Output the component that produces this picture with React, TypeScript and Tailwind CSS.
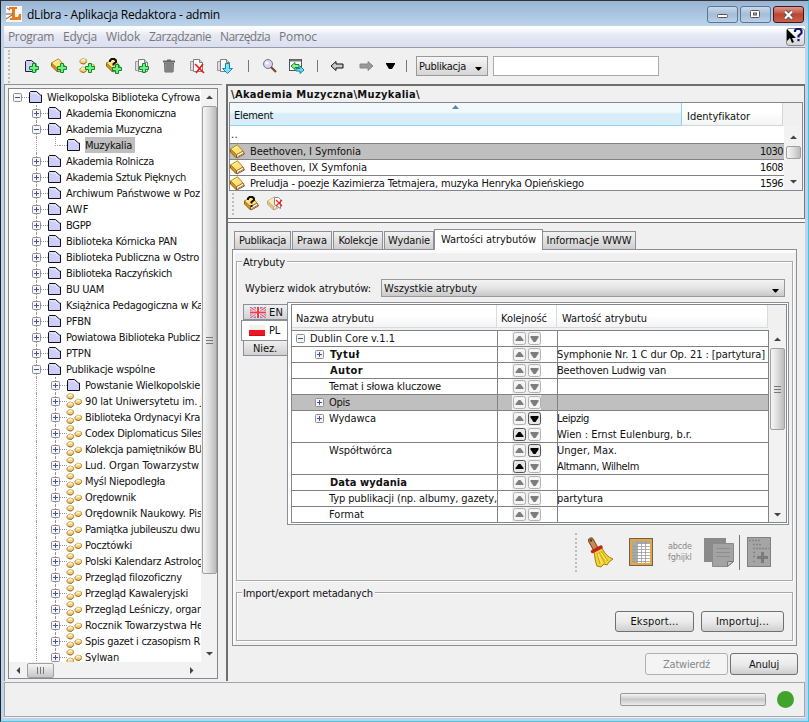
import React, { useLayoutEffect, useRef, useState } from "react";

/* Text run whose tracking is adjusted so that it spans w pixels. */
function T({ w, children, className = "" }: { w?: number; children: string; className?: string }) {
  const ref = useRef<HTMLSpanElement>(null);
  const [ls, setLs] = useState(0);
  useLayoutEffect(() => {
    if (!w || !ref.current) return;
    const nat = ref.current.getBoundingClientRect().width;
    setLs((w - nat) / children.length);
  }, [w, children]);
  return (
    <span ref={ref} className={"inline-block shrink-0 whitespace-pre " + className} style={{ letterSpacing: ls }}>
      {children}
    </span>
  );
}

const Svg = ({ w = 16, h = 16, children, className = "" }: { w?: number; h?: number; children: React.ReactNode; className?: string }) => (
  <svg width={w} height={h} viewBox={`0 0 ${w} ${h}`} className={"block shrink-0 " + className}>{children}</svg>
);

const Plus = ({ x = 0, y = 0 }: { x?: number; y?: number }) => (
  <path transform={`translate(${x} ${y})`} d="M3.5.5h3v3h3v3h-3v3h-3v-3h-3v-3h3z" fill="#6cf084" stroke="#0c8c26" />
);
const FolderIcon = () => (
  <Svg w={14} h={14}>
    <path d="M.5 2.500l1-1h6l4 3.500h1v7.500h-12z" fill="#cfcdfb" stroke="#111" />
    <path d="M2 3h5l3 3" stroke="#efeeff" fill="none" />
  </Svg>
);
const Book = () => (
  <>
    <path d="M6.500 10.500L13 7l1.500 3L7 14z" fill="#fff" stroke="#8a5b2c" />
    <path d="M8 12.500l6-3.500" stroke="#a7744a" />
    <path d="M.5 5v3L6.500 14v-3.500z" fill="#d89a1c" stroke="#8d5a08" />
    <path d="M.5 5L7.500.8 13 7l-6.500 3.500z" fill="#ffe27a" stroke="#b88416" />
    <path d="M2.500 5L7.200 2.200" stroke="#fff6bf" />
  </>
);
const BookIcon = () => <Svg w={16} h={15}><Book /></Svg>;
const GroupShape = () => (
  <g stroke="#b88a40" strokeWidth=".8">
    <path d="M.8 2.500l3-2 3.500 1 .4 2.500-2.700 2-3.800-1z" fill="#f6cf7c" />
    <path d="M.8 11l3-2 3.500 1 .4 2.500-2.700 2-3.800-1z" fill="#f6cf7c" />
    <path d="M8.800 8l3-2 3.500 1 .4 2.500-2.700 2-3.800-1z" fill="#f6cf7c" />
    <path d="M2.200 2.800l2-1.300 2 .7M2.200 11.300l2-1.300 2 .7M10.200 8.300l2-1.300 2 .7" stroke="#fff3c9" strokeWidth="1.500" fill="none" />
    <path d="M2 5.300l3 .8 2.500-1.800M2 13.800l3 .8 2.500-1.800M10 10.800l3 .8 2.500-1.800" stroke="#8d6426" fill="none" />
  </g>
);
const PageShape = () => (
  <g>
    <path d="M1.500 3.500h3v9h-3z" fill="#ddd" stroke="#999" />
    <path d="M4.500 1.500h6l3 3v9h-9z" fill="#fafafa" stroke="#808080" />
    <path d="M10.500 1.500v3h3" fill="#ddd" stroke="#808080" />
  </g>
);
const Quest = ({ x, y }: { x: number; y: number }) => (
  <path transform={`translate(${x} ${y})`} d="M0 3V1.500L1.500 0h3L6 1.500v1.500L3.500 5v1.500M3.500 8v2" fill="none" stroke="#111" strokeWidth="2" />
);

function Handle({ open, top = true, bottom = true }: { open: boolean; top?: boolean; bottom?: boolean }) {
  return (
    <div className="flex h-4 w-[9px] shrink-0 flex-col items-center">
      <div className={"h-1 border-l border-dotted " + (top ? "border-[#999]" : "border-transparent")} />
      <HandleBox open={open} />
      <div className={"h-[3px] border-l border-dotted " + (bottom ? "border-[#999]" : "border-transparent")} />
    </div>
  );
}
const HandleBox = ({ open }: { open: boolean }) => (
  <Svg w={9} h={9}>
    <rect x=".5" y=".5" width="8" height="8" rx="1" fill="#f5f5f5" stroke="#8f8f8f" />
    <path d={open ? "M2 4.500h5" : "M2 4.500h5M4.500 2v5"} stroke="#3a559c" />
  </Svg>
);

type Row = [number, string, string, number];
const tree: Row[] = [
  [0, "-", "Wielkopolska Biblioteka Cyfrowa", 153],
  [1, "+", "Akademia Ekonomiczna", 110],
  [1, "-", "Akademia Muzyczna", 96],
  [2, "", "Muzykalia", 46],
  [1, "+", "Akademia Rolnicza", 88],
  [1, "+", "Akademia Sztuk Pięknych", 120],
  [1, "+", "Archiwum Państwowe w Poz", 134],
  [1, "+", "AWF", 23],
  [1, "+", "BGPP", 25],
  [1, "+", "Biblioteka Kórnicka PAN", 111],
  [1, "+", "Biblioteka Publiczna w Ostro", 133],
  [1, "+", "Biblioteka Raczyńskich", 106],
  [1, "+", "BU UAM", 38],
  [1, "+", "Książnica Pedagogiczna w Ka", 137],
  [1, "+", "PFBN", 25],
  [1, "+", "Powiatowa Biblioteka Publicz", 134],
  [1, "+", "PTPN", 25],
  [1, "-", "Publikacje wspólne", 89],
  [2, "+", "Powstanie Wielkopolskie", 115],
  [3, "+", "90 lat Uniwersytetu im. J", 118],
  [3, "+", "Biblioteka Ordynacyi Kra", 115],
  [3, "+", "Codex Diplomaticus Siles", 117],
  [3, "+", "Kolekcja pamiętników BU", 117],
  [3, "+", "Lud. Organ Towarzystw", 114],
  [3, "+", "Myśl Niepodległa", 80],
  [3, "+", "Orędownik", 51],
  [3, "+", "Orędownik Naukowy. Pis", 117],
  [3, "+", "Pamiątka jubileuszu dwu", 115],
  [3, "+", "Pocztówki", 47],
  [3, "+", "Polski Kalendarz Astrolog", 118],
  [3, "+", "Przegląd filozoficzny", 97],
  [3, "+", "Przegląd Kawaleryjski", 103],
  [3, "+", "Przegląd Leśniczy, organ", 118],
  [3, "+", "Rocznik Towarzystwa He", 118],
  [3, "+", "Spis gazet i czasopism R", 115],
  [3, "+", "Sylwan", 34],
];

function TreeRow({ row }: { row: Row }) {
  const [level, sign, text, w] = row;
  return (
    <div className="flex h-4 shrink-0 items-center">
      {level === 0 && <div className="w-1 shrink-0" />}
      {level === 1 && <div className="w-[23px] shrink-0" />}
      {level > 1 && (
        <>
          <div className="w-[27px] shrink-0" />
          <div className="h-4 w-[15px] shrink-0 border-l border-dotted border-[#999]" />
        </>
      )}
      {sign ? (
        <Handle open={sign === "-"} top={level > 0} bottom={level > 0} />
      ) : (
        <div className="flex h-4 w-[9px] shrink-0 justify-end">
          <div className="h-[9px] w-[5px] border-b border-l border-dotted border-[#999]" />
        </div>
      )}
      <div className="mt-px h-px w-[7px] shrink-0 border-t border-dotted border-[#999]" />
      <div className="w-[19px] shrink-0">
        {level === 3 ? <Svg w={17} className="-ml-px"><GroupShape /></Svg> : <FolderIcon />}
      </div>
      {text === "Muzykalia" ? (
        <span className="-ml-px flex h-4 items-center bg-[#bfbfbf] pr-[3px]"><T w={47}>{text}</T></span>
      ) : (
        <T w={w} className="-ml-px">{text}</T>
      )}
    </div>
  );
}

const Tri = ({ dir, color = "#444" }: { dir: "u" | "d" | "l" | "r"; color?: string }) => {
  const d = { u: "M1 6h7L4.500 2.500z", d: "M1 3h7L4.500 6.500z", l: "M6 1v7L2.500 4.500z", r: "M3 1v7l3.500-3.500z" }[dir];
  return <Svg w={9} h={9}><path d={d} fill={color} /></Svg>;
};
const Grip = () => (
  <div className="flex flex-col gap-[2px]">
    {[0, 1, 2].map((i) => <div key={i} className="h-px w-[7px] bg-[#777]" />)}
  </div>
);
const thumbV = "flex items-center justify-center rounded-[2px] border border-[#a0a0a0] bg-linear-to-r from-[#f6f6f6] via-[#dddddd] to-[#bcbcbc]";
const btn = "flex items-center justify-center rounded-[3px] border border-[#707070] bg-linear-to-b from-[#f4f4f4] via-[#ebebeb] to-[#cfcfcf]";

function Gripper({ className = "" }: { className?: string }) {
  return <div className={"w-[2px] shrink-0 border-l-2 border-dotted border-[#bdbdbd] " + className} />;
}

function OrderButtons({ up = false, down = false }: { up?: boolean; down?: boolean }) {
  const B = (on: boolean, d: string) => (
    <Svg w={13} h={13}>
      <rect x=".5" y=".5" width="12" height="12" rx="2" fill={on ? "#e6e6e6" : "#f4f4f4"} stroke={on ? "#555" : "#b2b2b2"} />
      <path d={d} fill={on ? "#000" : "#7d7d7d"} />
    </Svg>
  );
  return (
    <div className="ml-[14px] flex h-[15px] w-[29px] items-center gap-[2px] bg-[#efefef] pl-px">
      {B(up, "M2.500 9V8l3-4h2l3 4v1z")}
      {B(down, "M2.500 4v1.500l3 4.500h2l3-4.500V4z")}
    </div>
  );
}

interface Attr { name: string; w: number; bold?: boolean; exp?: string; vals: [string, number][]; sel?: boolean }
const attrs: Attr[] = [
  { name: "Dublin Core v.1.1", w: 85, exp: "-", vals: [["", 0]] },
  { name: "Tytuł", w: 30, bold: true, exp: "+", vals: [["Symphonie Nr. 1 C dur Op. 21 : [partytura]", 208]] },
  { name: "Autor", w: 33, bold: true, vals: [["Beethoven Ludwig van", 109]] },
  { name: "Temat i słowa kluczowe", w: 112, vals: [["", 0]] },
  { name: "Opis", w: 21, exp: "+", vals: [["", 0]], sel: true },
  { name: "Wydawca", w: 47, exp: "+", vals: [["Leipzig", 32], ["Wien : Ernst Eulenburg, b.r.", 135]] },
  { name: "Współtwórca", w: 63, vals: [["Unger, Max.", 60], ["Altmann, Wilhelm", 82]] },
  { name: "Data wydania", w: 77, bold: true, vals: [["", 0]] },
  { name: "Typ publikacji (np. albumy, gazety,", w: 168, vals: [["partytura", 46]] },
  { name: "Format", w: 35, vals: [["", 0]] },
];

function AttrRow({ a }: { a: Attr }) {
  return (
    <div className={"flex shrink-0 border-t border-[#828282] " + (a.sel ? "bg-[#bfbfbf]" : "bg-white")}>
      <div className="flex w-[205px] shrink-0 overflow-hidden">
        {a.exp === "-" ? (
          <div className="flex h-[15px] items-center gap-[5px] pl-1"><HandleBox open /><T w={a.w}>{a.name}</T></div>
        ) : (
          <div className="flex h-[15px] items-center pl-[23px]">
            <div className="w-[15px] shrink-0">{a.exp && <HandleBox open={false} />}</div>
            <T w={a.w} className={a.bold ? "font-bold" : "-ml-px"}>{a.name}</T>
          </div>
        )}
      </div>
      <div className="flex w-[61px] shrink-0 flex-col gap-px border-x border-[#828282]">
        {a.vals.map((_, i) => <OrderButtons key={i} up={i > 0} down={a.vals.length > 1 && i === 0} />)}
      </div>
      <div className="flex w-[211px] flex-col gap-px border-r border-[#828282]">
        {a.vals.map(([v, w], i) => (
          <div key={i} className="-ml-px flex h-[15px] items-center">{v && <T w={w}>{v}</T>}</div>
        ))}
      </div>
    </div>
  );
}

function Titlebar() {
  const wb = "flex h-[17px] w-[31px] items-center justify-center rounded-[3px] border border-[#5d7590] bg-linear-to-b from-[#c9d9ea] via-[#a5bdd8] to-[#b9d0e8]";
  return (
    <div className="flex h-[25px] shrink-0 items-start bg-linear-to-b from-[#98b4d3] to-[#bdd5ec] pl-[5px]">
      <Svg w={16} h={16} className="mt-[5px]">
        <rect width="16" height="16" fill="#fdf6ee" />
        <path d="M3 1h8v2h-2v8h3l1-3h2v6H4v-2h2V3H3z" fill="#e87a1f" />
        <path d="M0 8h7M0 13l6-4M1 2l3 2" stroke="#7d5a3c" />
      </Svg>
      <div className="ml-[5px] mt-[5px] flex h-[17px] items-center font-['Open_Sans',sans-serif] text-[12px] text-black [font-stretch:normal]">
        <T w={193}>dLibra - Aplikacja Redaktora - admin</T>
      </div>
      <div className="ml-auto mr-[4px] mt-[5px] flex gap-[2px]">
        <div className={wb}><Svg w={12} h={10}><rect x=".5" y="4.500" width="10" height="3" rx="1" fill="#fff" stroke="#555" /></Svg></div>
        <div className={wb}><Svg w={11} h={9}><rect x=".5" y=".5" width="9" height="7" rx="1" fill="#fff" stroke="#555" /><rect x="3.500" y="3" width="3" height="2" fill="#a9c2dd" stroke="#555" /></Svg></div>
        <div className="flex h-[17px] w-[31px] items-center justify-center rounded-[3px] border border-[#4c1418] bg-linear-to-b from-[#dc9a8c] via-[#bd4533] to-[#c9604a]">
          <Svg w={11} h={10}><path d="M2 1.500l7 7M9 1.500l-7 7" stroke="#555" strokeWidth="4" /><path d="M2 1.500l7 7M9 1.500l-7 7" stroke="#fff" strokeWidth="2.200" /></Svg>
        </div>
      </div>
    </div>
  );
}

const menus: [string, number][] = [["Program", 46], ["Edycja", 34], ["Widok", 34], ["Zarządzanie", 62], ["Narzędzia", 50], ["Pomoc", 38]];

function Menubar() {
  return (
    <div className="flex h-[22px] shrink-0 items-center border-b border-[#999aa5] bg-linear-to-b from-[#fdfdfe] from-10% via-[#e6e9f4] via-45% to-[#dadff1] pl-1 font-['Open_Sans',sans-serif] text-[12px] text-[#777] [font-stretch:normal]">
      {menus.map(([m, w]) => <div key={m} className="mr-[9px] flex"><T w={w}>{m}</T></div>)}
      <div className="ml-auto flex h-[18px] w-[19px] items-center justify-center rounded-[3px] border border-[#888] bg-linear-to-b from-white to-[#d5d5d5]">
        <Svg w={19} h={18}>
          <path d="M1 1v12l3-3 2 5 2-1-2-4h4z" fill="#000" />
          <path d="M9 4V2.500L10.500 1h3.500l1.500 1.500V5L12.500 8v1.500M12.500 11v2.300" fill="none" stroke="#17177e" strokeWidth="2.200" />
        </Svg>
      </div>
    </div>
  );
}

function Toolbar() {
  const Sep = ({ className }: { className: string }) => <div className={"h-3 w-px shrink-0 bg-[#777] " + className} />;
  return (
    <div className="flex h-[36px] shrink-0 items-center bg-[#f0f0f0] pl-[4px]">
      <Gripper className="h-[33px]" />
      <div className="ml-[14px] flex w-[209px] shrink-0 justify-between">
        <Svg w={17}><path d="M1.500 3.500l1-1h5l3.500 3h1v8h-10.500z" fill="#d2cffc" stroke="#222" /><Plus x={5} y={5} /></Svg>
        <Svg w={17}><Book /><Plus x={6} y={5} /></Svg>
        <Svg w={17}><GroupShape /><Plus x={6} y={5} /></Svg>
        <Svg w={17}><Book /><Quest x={4} y={1} /><Plus x={6} y={6} /></Svg>
        <Svg w={17}><PageShape /><Plus x={5} y={5} /></Svg>
        <Svg w={17}><path d="M2 3.500h12M6 2.500h4" stroke="#666" strokeWidth="2" /><path d="M3.500 5h9l-.5 9H4z" fill="#999" stroke="#666" /><path d="M6 6v7M8 6v7M10 6v7" stroke="#6b6b6b" /></Svg>
        <Svg w={17}><PageShape /><path d="M6 6l9 9M14 6l-7 9" stroke="#f01717" strokeWidth="1.600" /></Svg>
        <Svg w={17}><PageShape /><path d="M9.500 5.500h4v5h3L11.500 15.500l-5-5h3z" fill="#7be3fb" stroke="#1a87a8" /></Svg>
      </div>
      <Sep className="ml-[15px]" />
      <Svg w={17} className="ml-[12px]">
        <circle cx="7" cy="6" r="4.500" fill="#d7d3fb" stroke="#777" /><circle cx="6" cy="5" r="1.500" fill="#fff" /><path d="M10 9l5 5" stroke="#7a4a28" strokeWidth="2.200" />
      </Svg>
      <Svg w={17} className="ml-[10px]">
        <rect x="1.500" y="1.500" width="12" height="11" fill="#fff" stroke="#555" /><path d="M2 2.500h11" stroke="#777" strokeWidth="2" />
        <path d="M3 8l4-3.500v2h4v3H7v2z" fill="#8fee9a" stroke="#138a2c" /><path d="M8 10.500h4V8l4 4-4 3.500V13H8z" fill="#6fdcf3" stroke="#17809c" />
      </Svg>
      <Sep className="ml-[12px]" />
      <Svg w={15} className="ml-[12px]"><path d="M1 8l5-4.500v2.500h7v4H6v2.500z" fill="#ccc" stroke="#111" /></Svg>
      <Svg w={15} className="ml-[14px]"><path d="M14 8L9 3.500v2.500H1v4h8v2.500z" fill="#999" stroke="#888" /></Svg>
      <Svg w={9} className="ml-[12px]"><path d="M0 5h9v1L6 11H3L0 6z" fill="#000" /></Svg>
      <Sep className="ml-[11px]" />
      <div className="ml-[9px] flex h-5 w-[72px] shrink-0 items-center border border-[#999] bg-linear-to-b from-[#f7f7f7] to-[#d5d5d5] pl-[2px]">
        <T w={47}>Publikacja</T>
        <Svg w={9} h={9} className="ml-[8px] mt-1"><path d="M1 3h7L5 6.500H4z" fill="#000" /></Svg>
      </div>
      <div className="ml-[5px] h-5 w-[166px] shrink-0 border border-[#aaa] bg-white" />
    </div>
  );
}

function LeftPane() {
  return (
    <div className="h-[597px] w-[218px] shrink-0 border-l border-t border-[#8f8f8f] bg-[#f0f0f0] pl-[3px] pt-[3px]">
      <div className="flex h-[591px] w-[210px] flex-col border border-[#828790] bg-white">
        <div className="flex h-[573px]">
          <div className="flex w-[192px] shrink-0 flex-col overflow-hidden">
            {tree.map((r, i) => <TreeRow key={i} row={r} />)}
          </div>
          <div className="flex w-4 flex-col items-center bg-[#f2f2f2]">
            <div className="flex h-[17px] items-center"><Tri dir="u" /></div>
            <div className={thumbV + " h-[468px] w-[15px]"}><Grip /></div>
            <div className="mt-auto flex h-[17px] items-center"><Tri dir="d" /></div>
          </div>
        </div>
        <div className="flex h-4 items-center bg-[#f2f2f2]">
          <div className="flex w-[18px] justify-center"><Tri dir="l" /></div>
          <div className="flex h-[15px] w-[27px] items-center justify-center gap-[2px] rounded-[2px] border border-[#a0a0a0] bg-linear-to-b from-[#f6f6f6] to-[#c6c6c6]">
            {[0, 1, 2].map((i) => <div key={i} className="h-[7px] w-px bg-[#777]" />)}
          </div>
          <div className="ml-auto mr-[21px]"><Tri dir="r" /></div>
        </div>
      </div>
    </div>
  );
}

const pubs: [string, number, string, boolean][] = [
  ["Beethoven, I Symfonia", 111, "1030", true],
  ["Beethoven, IX Symfonia", 117, "1608", false],
  ["Preludja - poezje Kazimierza Tetmajera, muzyka Henryka Opieńskiego", 334, "1596", false],
];

function ListPane() {
  return (
    <div className="flex h-[133px] shrink-0 flex-col border-b border-r border-[#777] pl-px pt-px">
      <div className="flex h-[15px] items-center pl-[2px] font-bold"><T w={189}>\Akademia Muzyczna\Muzykalia\</T></div>
      <div className="flex h-[89px] w-[574px] flex-col border border-[#828790] bg-[#f0f0f0]">
        <div className="flex h-[23px] shrink-0">
          <div className="flex w-[452px] flex-col border-b border-r border-[#8fd4f2] bg-linear-to-b from-[#f2f9fd] from-40% to-[#d8edf7] to-50%">
            <Svg w={9} h={4} className="ml-[221px] mt-[2px]"><path d="M1 4h7L4.500 0z" fill="#5b87a8" /></Svg>
            <div className="-mt-px flex h-[14px] items-center pl-[4px]"><T w={39}>Element</T></div>
          </div>
          <div className="flex w-[101px] items-center border-b border-r border-[#d5d5d5] bg-linear-to-b from-white from-40% to-[#f3f4f5] pl-[5px] pt-[5px]"><T w={63}>Identyfikator</T></div>
        </div>
        <div className="flex h-[64px]">
          <div className="flex w-[554px] shrink-0 flex-col overflow-hidden bg-white">
            <div className="flex h-[17px] shrink-0 items-end pb-px pl-px"><T w={7}>..</T></div>
            {pubs.map(([t, w, id, sel]) => (
              <div key={id} className={"flex h-4 shrink-0 items-center border-t border-[#828282] " + (sel ? "bg-[#bfbfbf]" : "")}>
                <BookIcon />
                <div className="ml-1 flex"><T w={w}>{t}</T></div>
                <div className="ml-auto mr-px flex"><T w={23}>{id}</T></div>
              </div>
            ))}
          </div>
          <div className="flex flex-1 flex-col items-center bg-[#f2f2f2] pt-[3px]">
            <div className="flex h-[17px] items-center"><Tri dir="u" /></div>
            <div className={thumbV + " h-[13px] w-[15px]"} />
            <div className="mt-auto flex h-[17px] items-center"><Tri dir="d" /></div>
          </div>
        </div>
      </div>
      <div className="flex h-[25px] items-center pl-[3px]">
        <Gripper className="h-[22px]" />
        <Svg w={16} className="ml-[10px]"><Book /><Quest x={4} y={1} /></Svg>
        <Svg w={17} className="ml-[7px]"><g opacity=".5"><Book /></g><path d="M7.500 1.500h4l2 2v9l-6-4z" fill="#fff" stroke="#888" /><path d="M9 4l6 6M15 4L9 10" stroke="#ec2323" strokeWidth="1.300" /></Svg>
      </div>
    </div>
  );
}

function Tab({ children, w, className }: { children: string; w: number; className: string }) {
  return (
    <div className={"flex h-[18px] shrink-0 items-center justify-center border border-b-0 border-[#8b8f98] bg-linear-to-b from-[#f2f2f2] to-[#cecece] " + className}>
      <T w={w}>{children}</T>
    </div>
  );
}

function AttrTable() {
  const hd = "flex items-center border-b border-r border-[#dadbdc] bg-linear-to-b from-white from-50% to-[#f3f4f6] pt-[4px]";
  return (
    <div className="flex">
      <div className="flex w-[46px] shrink-0 flex-col items-end pt-[2px]">
        <div className="flex h-4 w-[44px] items-center gap-[3px] border border-r-0 border-[#8b8f98] bg-linear-to-b from-[#f0f0f0] to-[#d2d2d2] pl-[6px]">
          <Svg w={16} h={11}>
            <rect width="16" height="11" fill="#8189d0" />
            <path d="M0 0l16 11M16 0L0 11" stroke="#f8e6ec" strokeWidth="3" />
            <path d="M0 0l16 11M16 0L0 11" stroke="#ec5562" strokeWidth="1.100" />
            <path d="M8 0v11M0 5.500h16" stroke="#fff" strokeWidth="3.600" />
            <path d="M8 0v11M0 5.500h16" stroke="#f03a44" strokeWidth="2" />
          </Svg>
          <T w={14}>EN</T>
        </div>
        <div className="flex h-[21px] w-[46px] items-center gap-[4px] border border-r-0 border-[#8b8f98] bg-white pl-[7px]">
          <Svg w={16} h={11}><rect width="16" height="11" fill="#f1f1f1" /><rect y="5" width="16" height="6" fill="#ee1722" /><path d="M0 10.500h16" stroke="#c01218" /></Svg>
          <T w={11}>PL</T>
        </div>
        <div className="flex h-[15px] w-[44px] items-center border border-r-0 border-t-0 border-[#8b8f98] bg-linear-to-b from-[#efefef] to-[#d0d0d0] pl-[9px]"><T w={24}>Niez.</T></div>
      </div>
      <div className="h-[223px] w-[502px] shrink-0 border border-[#8b8f98] bg-white pl-[3px] pt-px">
        <div className="flex h-[219px] w-[496px] flex-col overflow-hidden border border-[#828790] bg-[#f0f0f0]">
          <div className="flex h-[23px] shrink-0">
            <div className={hd + " w-[205px] pl-1"}><T w={78}>Nazwa atrybutu</T></div>
            <div className={hd + " w-[60px] pl-1"}><T w={46}>Kolejność</T></div>
            <div className={hd + " w-[211px] pl-[5px]"}><T w={85}>Wartość atrybutu</T></div>
          </div>
          <div className="mt-[2px] flex h-[192px]">
            <div className="flex w-[477px] shrink-0 flex-col">{attrs.map((a) => <AttrRow key={a.name} a={a} />)}</div>
            <div className="flex flex-1 flex-col items-center bg-[#f2f2f2]">
              <div className="flex h-[18px] items-center"><Tri dir="u" /></div>
              <div className={thumbV + " h-[82px] w-[15px]"}><Grip /></div>
              <div className="mt-auto flex h-[16px] items-center"><Tri dir="d" /></div>
            </div>
          </div>
        </div>
      </div>
    </div>
  );
}

function EditTools() {
  return (
    <div className="mt-[7px] flex h-[40px] items-center pl-[338px]">
      <Gripper className="h-[39px]" />
      <Svg w={28} h={31} className="ml-[10px]">
        <path d="M4 3.500l5 9" stroke="#7c4a22" strokeWidth="6" strokeLinecap="round" />
        <path d="M4 3.500l5 9" stroke="#c78c50" strokeWidth="4" strokeLinecap="round" />
        <circle cx="4" cy="3.500" r="1.200" fill="#5d3718" />
        <path d="M15 11C18 17 21 20 26 22L22 25 20 28 17 27 14 30 10 29C8 24 8 20 7 15z" fill="#f3d32f" stroke="#a57c0c" />
        <path d="M10 16l3 11M12 15l6 11M14 14l7 10" stroke="#b89416" strokeWidth=".8" />
        <path d="M11 17l4 10M14 16l5 7" stroke="#fff29a" strokeWidth=".8" />
        <path d="M5.500 14.500l8.500-4.500" stroke="#c52122" strokeWidth="3.500" strokeLinecap="round" />
      </Svg>
      <Svg w={25} h={28} className="ml-[14px]">
        <rect x=".5" y=".5" width="23" height="27" fill="#fff" stroke="#6b6255" /><rect x="2" y="2" width="20" height="24" fill="#fff" stroke="#e5a841" strokeWidth="2" />
        <path d="M3 3h5v22H3zM3 3h18v3H3z" fill="#a9a9a9" />
        <path d="M3 8.500h18M3 11.500h18M3 14.500h18M3 17.500h18M3 20.500h18M3 23.500h18M8.500 3v22M12.500 3v22M16.500 3v22" stroke="#9a9a9a" strokeWidth=".8" />
      </Svg>
      <div className="ml-[14px] flex w-[26px] flex-col text-[9px] leading-[11px] text-[#888]"><T w={25}>abcde</T><T w={25}>fghijkl</T></div>
      <Svg w={31} h={31} className="ml-[10px]">
        <path d="M0 1h22v24H0z" fill="#8a8a8a" /><path d="M8.500 6.500h21v18l-6 5h-15z" fill="#a3a3a3" stroke="#8a8a8a" /><path d="M23.500 29.500v-5h6z" fill="#c4c4c4" stroke="#7a7a7a" />
        <path d="M4 4.500h14M12 11.500h14M12 15.500h14M12 19.500h14M4 9.500h3M4 13.500h3" stroke="#8e8e8e" />
      </Svg>
      <div className="ml-[4px] h-[35px] w-px bg-[#777]" />
      <Svg w={25} h={31} className="ml-[7px]">
        <rect x=".5" y=".5" width="23" height="29" fill="#a5a5a5" stroke="#808080" />
        <path d="M2 3.500h12M6 7.500h8M6 11.500h16M6 15.500h2M6 19.500h2M6 24.500h2" stroke="#858585" strokeWidth="1.500" strokeDasharray="2 1" /><path d="M15.500 15v11M10 20.500h11" stroke="#7b7b7b" strokeWidth="3" />
      </Svg>
    </div>
  );
}

function EditPane() {
  return (
    <div className="flex h-[459px] flex-col border-t border-[#777] bg-[#f0f0f0] pl-[4px] pt-[6px]">
      <div className="relative z-10 -mb-px flex h-[21px] items-end pl-[2px]">
        <div className="flex gap-px pb-px">
          <Tab w={47} className="w-[57px]">Publikacja</Tab>
          <Tab w={30} className="w-[40px]">Prawa</Tab>
          <Tab w={39} className="w-[50px]">Kolekcje</Tab>
          <Tab w={42} className="w-[50px]">Wydanie</Tab>
        </div>
        <div className="flex h-[21px] w-[109px] shrink-0 items-center justify-center border border-b-0 border-[#8b8f98] bg-white pb-px"><T w={95}>Wartości atrybutów</T></div>
        <div className="flex pb-px"><Tab w={85} className="w-[93px] border-l-0">Informacje WWW</Tab></div>
      </div>
      <div className="flex h-[397px] w-[565px] shrink-0 flex-col border border-[#8b8f98] bg-[#f0f0f0] shadow-[inset_2px_3px_0_#fbfbfb]">
        <div className="ml-[3px] mt-[11px] flex h-[320px] w-[557px] flex-col border border-[#a9a9a9] shadow-[inset_1px_1px_0_#fff,1px_1px_0_#fff]">
          <div className="ml-[5px] -mt-[8px] flex h-4 w-[45px] items-center bg-[#f0f0f0] pl-px"><T w={42}>Atrybuty</T></div>
          <div className="mt-[9px] flex items-center pl-[8px]">
            <T w={126}>Wybierz widok atrybutów:</T>
            <div className="ml-[10px] flex h-[18px] w-[404px] shrink-0 items-center border border-[#999] bg-linear-to-b from-[#f3f3f3] via-[#e4e4e4] to-[#c8c8c8] pl-[2px]">
              <T w={93}>Wszystkie atrybuty</T>
              <Svg w={9} h={9} className="ml-auto mr-[4px] mt-1"><path d="M1 3h7L5 6.500H4z" fill="#000" /></Svg>
            </div>
          </div>
          <div className="mt-[5px] pl-[4px]"><AttrTable /></div>
          <EditTools />
        </div>
        <div className="ml-[3px] mt-[11px] flex h-[49px] w-[557px] shrink-0 flex-col border border-[#a9a9a9] shadow-[inset_1px_1px_0_#fff,1px_1px_0_#fff]">
          <div className="ml-[5px] -mt-[8px] flex h-4 w-[133px] items-center bg-[#f0f0f0] pl-px"><T w={130}>Import/export metadanych</T></div>
          <div className="mt-[10px] flex justify-end gap-[7px] pr-[8px]">
            <div className={btn + " h-[21px] w-[79px]"}><T w={48}>Eksport...</T></div>
            <div className={btn + " h-[21px] w-[83px]"}><T w={53}>Importuj...</T></div>
          </div>
        </div>
      </div>
      <div className="mt-[7px] flex justify-end gap-[2px] pr-[7px]">
        <div className="flex h-[22px] w-[83px] items-center justify-center rounded-[3px] border border-[#b0b0b0] bg-[#f4f4f4] text-[#888]"><T w={47}>Zatwierdź</T></div>
        <div className={btn + " h-[22px] w-[68px]"}><T w={30}>Anuluj</T></div>
      </div>
    </div>
  );
}

export default function App() {
  return (
    <div className="flex h-[722px] w-[809px] flex-col overflow-hidden border-b border-r border-b-[#3fc6e4] border-r-[#3fc6e4] border-l border-t border-l-[#222] border-t-[#333] bg-[#bdd5ec] pb-[3px] pl-[3px] pr-[3px] font-['DejaVu_Sans_Condensed','DejaVu_Sans',sans-serif] text-[11px] leading-[15px] text-[#111] [font-stretch:condensed]">
      <div className="-mx-[3px] shrink-0"><Titlebar /></div>
      <Menubar />
      <div className="flex min-h-0 flex-1 flex-col bg-[#f0f0f0]">
        <Toolbar />
        <div className="flex h-[598px] shrink-0">
          <LeftPane />
          <div className="ml-[4px] flex h-[597px] w-[579px] shrink-0 flex-col border-l-2 border-t-2 border-[#6e6e6e]">
            <ListPane />
            <div className="h-[3px] bg-[#fafafa]" />
            <EditPane />
          </div>
        </div>
        <div className="flex h-[35px] shrink-0 items-center justify-end border border-[#a5a5a5] pr-[10px]">
          <div className="h-[13px] w-[146px] rounded-[2px] border border-[#999] bg-linear-to-b from-[#f5f5f5] via-[#c9c9c9] to-[#ececec]" />
          <div className="ml-[11px] h-[17px] w-[17px] rounded-full bg-[#3fa32c]" />
        </div>
      </div>
    </div>
  );
}
